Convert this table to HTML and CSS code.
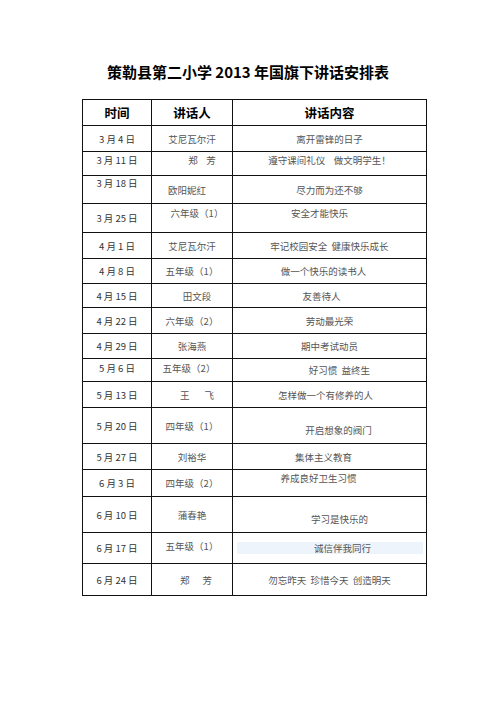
FILE: index.html
```html
<!DOCTYPE html>
<html lang="zh">
<head>
<meta charset="utf-8">
<title>策勒县第二小学2013年国旗下讲话安排表</title>
<link rel="stylesheet" href="styles.css">
</head>
<body>
<div class="page">
  <h1 class="title">策勒县第二小学 2013 年国旗下讲话安排表</h1>
  <table class="sched">
    <colgroup><col class="c1"><col class="c2"><col class="c3"></colgroup>
    <tr class="head h26"><th>时间</th><th>讲话人</th><th>讲话内容</th></tr>
    <tr class="h26"><td class="d">3 月 4 日</td><td>艾尼瓦尔汗</td><td>离开雷锋的日子</td></tr>
    <tr class="h24"><td class="d up4">3 月 11 日</td><td class="up4 sr10">郑&nbsp;&nbsp;&nbsp;&nbsp;芳</td><td class="up4">遵守课间礼仪&nbsp;&nbsp;&nbsp;&nbsp;做文明学生！</td></tr>
    <tr class="h28"><td class="d top">3 月 18 日</td><td class="sl5">欧阳妮红</td><td>尽力而为还不够</td></tr>
    <tr class="h29"><td class="d">3 月 25 日</td><td class="up6 sr5">六年级（1）</td><td class="up6 sl10">安全才能快乐</td></tr>
    <tr class="h26"><td class="d">4 月 1 日</td><td>艾尼瓦尔汗</td><td>牢记校园安全&nbsp;&nbsp;健康快乐成长</td></tr>
    <tr class="h25"><td class="d">4 月 8 日</td><td>五年级（1）</td><td class="sl6">做一个快乐的读书人</td></tr>
    <tr class="h24"><td class="d">4 月 15 日</td><td class="sr5">田文段</td><td class="sl8">友善待人</td></tr>
    <tr class="h26"><td class="d">4 月 22 日</td><td>六年级（2）</td><td>劳动最光荣</td></tr>
    <tr class="h25"><td class="d">4 月 29 日</td><td>张海燕</td><td>期中考试动员</td></tr>
    <tr class="h23"><td class="d up3">5 月 6 日</td><td class="up3 sl3">五年级（2）</td><td class="sr10">好习惯&nbsp;&nbsp;益终生</td></tr>
    <tr class="h26"><td class="d">5 月 13 日</td><td class="sr5">王&nbsp;&nbsp;&nbsp;&nbsp;&nbsp;&nbsp;&nbsp;飞</td><td class="sl4">怎样做一个有修养的人</td></tr>
    <tr class="h36"><td class="d">5 月 20 日</td><td>四年级（1）</td><td class="dn8 sr9">开启想象的阀门</td></tr>
    <tr class="h26"><td class="d">5 月 27 日</td><td>刘裕华</td><td class="sl6">集体主义教育</td></tr>
    <tr class="h27"><td class="d">6 月 3 日</td><td>四年级（2）</td><td class="up6 sl11">养成良好卫生习惯</td></tr>
    <tr class="h36"><td class="d">6 月 10 日</td><td>蒲春艳</td><td class="dn8 sr10">学习是快乐的</td></tr>
    <tr class="h31"><td class="d">6 月 17 日</td><td class="up3">五年级（1）</td><td class="hl-cell"><span class="hl">诚信伴我同行</span></td></tr>
    <tr class="h32"><td class="d">6 月 24 日</td><td class="sr4">郑&nbsp;&nbsp;&nbsp;&nbsp;&nbsp;&nbsp;芳</td><td>勿忘昨天&nbsp;&nbsp;珍惜今天&nbsp;&nbsp;创造明天</td></tr>
  </table>
</div>
</body>
</html>
```
FILE: styles.css
```css
html, body {
  margin: 0;
  padding: 0;
  background: #fff;
}
body {
  font-family: "Noto Sans CJK SC", "Liberation Sans", sans-serif;
}
.page {
  width: 496px;
  padding-top: 62px;
}
.title {
  margin: 0;
  font-size: 15px;
  line-height: 20px;
  font-weight: bold;
  color: #000;
  text-align: center;
  letter-spacing: 0;
}
.sched {
  margin: 17px 0 0 82px;
  border-collapse: collapse;
  table-layout: fixed;
  width: 344px;
}
.c1 { width: 69px; }
.c2 { width: 81px; }
.c3 { width: 194px; }
.sched th, .sched td {
  border: 1px solid #111;
  padding: 0;
  text-align: center;
  vertical-align: middle;
  line-height: 12px;
  white-space: nowrap;
}
.sched th {
  font-size: 12.5px;
  font-weight: bold;
  color: #000;
}
.sched td {
  font-size: 9.5px;
  color: #555;
}
.sched td.d {
  color: #333;
  font-size: 9.5px;
}
.h23 { height: 23px; }
.h24 { height: 24px; }
.h25 { height: 25px; }
.h26 { height: 26px; }
.h27 { height: 27px; }
.h28 { height: 28px; }
.h29 { height: 29px; }
.h31 { height: 31px; }
.h32 { height: 32px; }
.h36 { height: 36px; }

.sched td.top { vertical-align: top; padding-top: 1px; }
.sched td.up3 { padding-bottom: 5px; }
.sched td.up4 { padding-bottom: 8px; }
.sched td.up6 { padding-bottom: 10px; }
.sched td.dn8 { padding-top: 8px; }
.sched td.sr4 { padding-left: 8px; }
.sched td.sr5 { padding-left: 10px; }
.sched td.sr9 { padding-left: 18px; }
.sched td.sr10 { padding-left: 20px; }
.sched td.sl3 { padding-right: 6px; }
.sched td.sl4 { padding-right: 8px; }
.sched td.sl5 { padding-right: 10px; }
.sched td.sl6 { padding-right: 12px; }
.sched td.sl8 { padding-right: 16px; }
.sched td.sl10 { padding-right: 20px; }
.sched td.sl11 { padding-right: 22px; }

.sched td.hl-cell { padding: 0 3px 0 4px; }
.hl {
  display: block;
  background: #eef4fb;
  line-height: 12px;
  padding-left: 25px;
}
```
